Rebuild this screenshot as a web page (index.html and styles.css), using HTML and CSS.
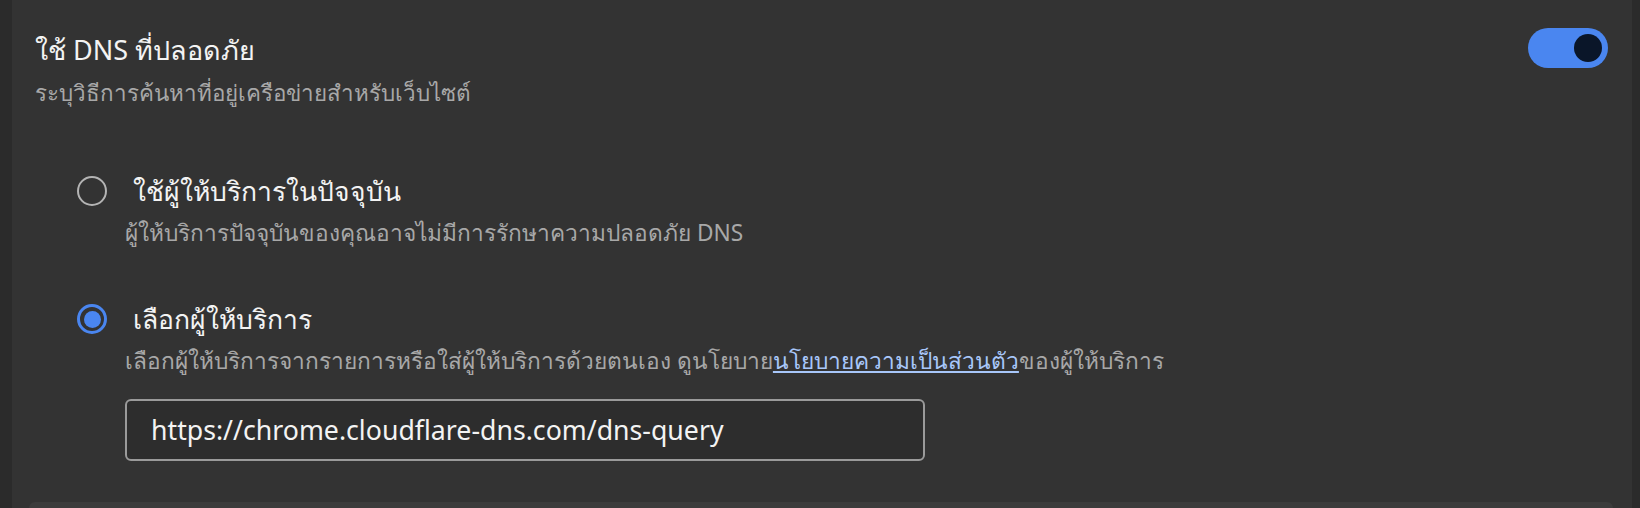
FILE: index.html
```html
<!DOCTYPE html>
<html lang="th">
<head>
<meta charset="utf-8">
<title>DNS</title>
<link rel="stylesheet" href="styles.css">
</head>
<body>
<div class="page">
  <div class="gutter-left"></div>
  <main class="panel">
    <section class="header">
      <div class="header-text">
        <div class="title">ใช้ DNS ที่ปลอดภัย</div>
        <div class="subtitle">ระบุวิธีการค้นหาที่อยู่เครือข่ายสำหรับเว็บไซต์</div>
      </div>
      <div class="toggle"><div class="knob"></div></div>
    </section>
    <section class="options">
      <div class="option">
        <div class="radio"></div>
        <div class="option-body">
          <div class="label">ใช้ผู้ให้บริการในปัจจุบัน</div>
          <div class="desc">ผู้ให้บริการปัจจุบันของคุณอาจไม่มีการรักษาความปลอดภัย DNS</div>
        </div>
      </div>
      <div class="option option-second">
        <div class="radio checked"><div class="dot"></div></div>
        <div class="option-body">
          <div class="label">เลือกผู้ให้บริการ</div>
          <div class="desc">เลือกผู้ให้บริการจากรายการหรือใส่ผู้ให้บริการด้วยตนเอง ดูนโยบาย<a class="link" href="#">นโยบายความเป็นส่วนตัว</a>ของผู้ให้บริการ</div>
          <div class="input">https://chrome.cloudflare-dns.com/dns-query</div>
        </div>
      </div>
    </section>
    <div class="next-card"></div>
  </main>
  <div class="gutter-right"></div>
</div>
</body>
</html>
```

FILE: styles.css
```css
html, body {
  margin: 0;
  padding: 0;
  background: #2b2b2b;
}
body {
  font-family: "Noto Sans", "Open Sans", sans-serif;
  color: #e3e3e3;
}
.page {
  display: flex;
  width: 1640px;
  height: 508px;
  overflow: hidden;
}
.gutter-left {
  width: 12px;
  background: #2b2b2b;
  flex: none;
}
.gutter-right {
  width: 8px;
  background: #2b2b2b;
  flex: none;
}
.panel {
  flex: 1;
  background: #333333;
  display: flex;
  flex-direction: column;
}
.header {
  display: flex;
  justify-content: space-between;
  align-items: flex-start;
  padding: 32px 24px 0 23px;
}
.title {
  font-size: 27px;
  line-height: 36px;
  color: #f3f3f3;
}
.subtitle {
  font-size: 22.4px;
  line-height: 32px;
  margin-top: 9px;
  color: #a8a8a8;
}
.toggle {
  width: 80px;
  height: 40px;
  border-radius: 20px;
  background: #4a86f0;
  margin-top: -4px;
  display: flex;
  align-items: center;
  justify-content: flex-end;
  padding-right: 6px;
  box-sizing: border-box;
}
.knob {
  width: 28px;
  height: 28px;
  border-radius: 50%;
  background: #0a1629;
}
.options {
  display: flex;
  flex-direction: column;
  padding: 64px 0 0 65px;
}
.option {
  display: flex;
  align-items: flex-start;
  gap: 18px;
}
.option-second {
  margin-top: 52px;
}
.radio {
  width: 30px;
  height: 30px;
  box-sizing: border-box;
  border: 2px solid #b4b4b4;
  border-radius: 50%;
  flex: none;
  display: flex;
  align-items: center;
  justify-content: center;
  margin-top: 3px;
}
.radio.checked {
  border: 3px solid #4a86f0;
}
.dot {
  width: 17px;
  height: 17px;
  border-radius: 50%;
  background: #4a86f0;
}
.label {
  font-size: 26.5px;
  line-height: 36px;
  padding-left: 8px;
  color: #f3f3f3;
  font-weight: 500;
}
.desc {
  font-size: 22.7px;
  line-height: 32px;
  margin-top: 8px;
  color: #a8a8a8;
}
.link {
  color: #a8c7fa;
  text-decoration: underline;
}
.input {
  margin-top: 22px;
  width: 800px;
  height: 62px;
  box-sizing: border-box;
  border: 2px solid #9a9a9a;
  border-radius: 6px;
  background: #2d2d2d;
  padding: 0 24px;
  font-size: 26.7px;
  line-height: 58px;
  color: #f3f3f3;
}
.next-card {
  margin: auto 19px 0 17px;
  height: 6px;
  background: #3c3c3c;
  border-radius: 8px 8px 0 0;
}
```
